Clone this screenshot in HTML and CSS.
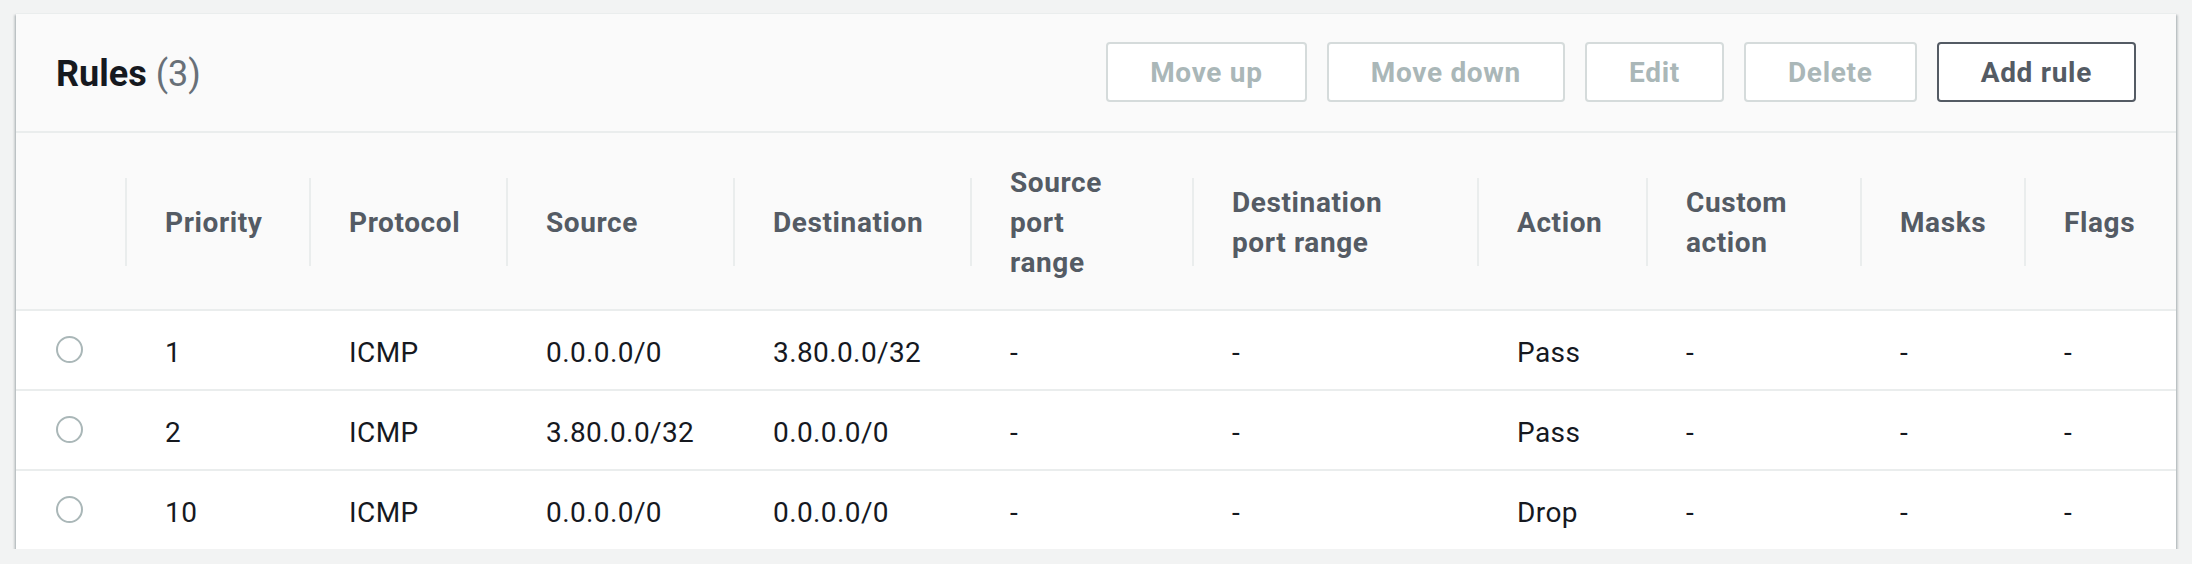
FILE: index.html
```html
<!DOCTYPE html>
<html lang="en">
<head>
<meta charset="utf-8">
<title>Rules</title>
<link rel="stylesheet" href="styles.css">
</head>
<body>
<div class="card">
  <div class="card-header">
    <h2 class="title">Rules <span class="count">(3)</span></h2>
    <div class="actions">
      <button class="btn" disabled>Move up</button>
      <button class="btn" disabled>Move down</button>
      <button class="btn" disabled>Edit</button>
      <button class="btn" disabled>Delete</button>
      <button class="btn btn-normal">Add rule</button>
    </div>
  </div>
  <table class="rules">
    <colgroup>
      <col class="c-select">
      <col class="c-priority">
      <col class="c-protocol">
      <col class="c-source">
      <col class="c-dest">
      <col class="c-sport">
      <col class="c-dport">
      <col class="c-action">
      <col class="c-custom">
      <col class="c-masks">
      <col class="c-flags">
    </colgroup>
    <thead>
      <tr>
        <th class="sel"></th>
        <th>Priority</th>
        <th>Protocol</th>
        <th>Source</th>
        <th>Destination</th>
        <th>Source<br>port<br>range</th>
        <th>Destination<br>port range</th>
        <th>Action</th>
        <th>Custom<br>action</th>
        <th>Masks</th>
        <th>Flags</th>
      </tr>
    </thead>
    <tbody>
      <tr>
        <td class="sel"><span class="radio"></span></td>
        <td>1</td>
        <td>ICMP</td>
        <td>0.0.0.0/0</td>
        <td>3.80.0.0/32</td>
        <td>-</td>
        <td>-</td>
        <td>Pass</td>
        <td>-</td>
        <td>-</td>
        <td>-</td>
      </tr>
      <tr>
        <td class="sel"><span class="radio"></span></td>
        <td>2</td>
        <td>ICMP</td>
        <td>3.80.0.0/32</td>
        <td>0.0.0.0/0</td>
        <td>-</td>
        <td>-</td>
        <td>Pass</td>
        <td>-</td>
        <td>-</td>
        <td>-</td>
      </tr>
      <tr>
        <td class="sel"><span class="radio"></span></td>
        <td>10</td>
        <td>ICMP</td>
        <td>0.0.0.0/0</td>
        <td>0.0.0.0/0</td>
        <td>-</td>
        <td>-</td>
        <td>Drop</td>
        <td>-</td>
        <td>-</td>
        <td>-</td>
      </tr>
    </tbody>
  </table>
</div>
</body>
</html>
```
FILE: styles.css
```css
* { box-sizing: border-box; }

html, body {
  margin: 0;
  background: #f2f3f3;
}

body {
  padding: 13px 16px 0 16px;
  font-family: Roboto, "Noto Sans", "Liberation Sans", sans-serif;
  color: #16191f;
}

.card {
  background: #ffffff;
  box-shadow: 0 2px 2px 0 rgba(0, 28, 36, 0.3),
              2px 2px 2px 0 rgba(0, 28, 36, 0.15),
              -2px 2px 2px 0 rgba(0, 28, 36, 0.15);
  border-top: 1px solid #eaeded;
}

.card-header {
  display: flex;
  align-items: center;
  justify-content: space-between;
  height: 119px;
  padding: 0 40px;
  background: #fafafa;
  border-bottom: 2px solid #eaeded;
}

.title {
  margin: 0;
  padding-top: 3px;
  font-size: 36px;
  line-height: 44px;
  font-weight: 700;
  color: #16191f;
}

.count {
  font-weight: 400;
  color: #687078;
}

.actions {
  display: flex;
  gap: 20px;
  margin-top: -2px;
}

.btn {
  font-family: inherit;
  font-size: 28px;
  line-height: 40px;
  font-weight: 700;
  letter-spacing: 0.7px;
  padding: 9px 42px 7px;
  border: 2px solid #d5dbdb;
  border-radius: 4px;
  background: #ffffff;
  color: #aab7b8;
}

.btn-normal {
  border-color: #545b64;
  color: #545b64;
}

.rules {
  width: 100%;
  table-layout: fixed;
  border-collapse: separate;
  border-spacing: 0;
}

.c-select { width: 109px; }
.c-priority { width: 184px; }
.c-protocol { width: 197px; }
.c-source { width: 227px; }
.c-dest { width: 237px; }
.c-sport { width: 222px; }
.c-dport { width: 285px; }
.c-action { width: 169px; }
.c-custom { width: 214px; }
.c-masks { width: 164px; }
.c-flags { width: 152px; }

.rules th {
  position: relative;
  background: #fafafa;
  border-bottom: 2px solid #eaeded;
  padding: 30px 20px 26px 40px;
  text-align: left;
  vertical-align: middle;
  font-size: 28px;
  line-height: 40px;
  font-weight: 700;
  letter-spacing: 0.6px;
  color: #545b64;
  white-space: nowrap;
}

.rules th + th::before {
  content: "";
  position: absolute;
  left: 0;
  top: 50%;
  width: 2px;
  height: 88px;
  margin-top: -43px;
  background: #eaeded;
}

.rules td {
  padding: 22px 20px 16px 40px;
  border-bottom: 2px solid #eaeded;
  vertical-align: middle;
  font-size: 28px;
  line-height: 40px;
  font-weight: 400;
  letter-spacing: 0.4px;
  color: #16191f;
  white-space: nowrap;
}

.rules tbody tr:last-child td {
  border-bottom: none;
}

.radio {
  display: block;
  width: 27px;
  height: 27px;
  margin: 3px 0 10px;
  border: 2px solid #aab7b8;
  border-radius: 50%;
  background: #ffffff;
}
```
